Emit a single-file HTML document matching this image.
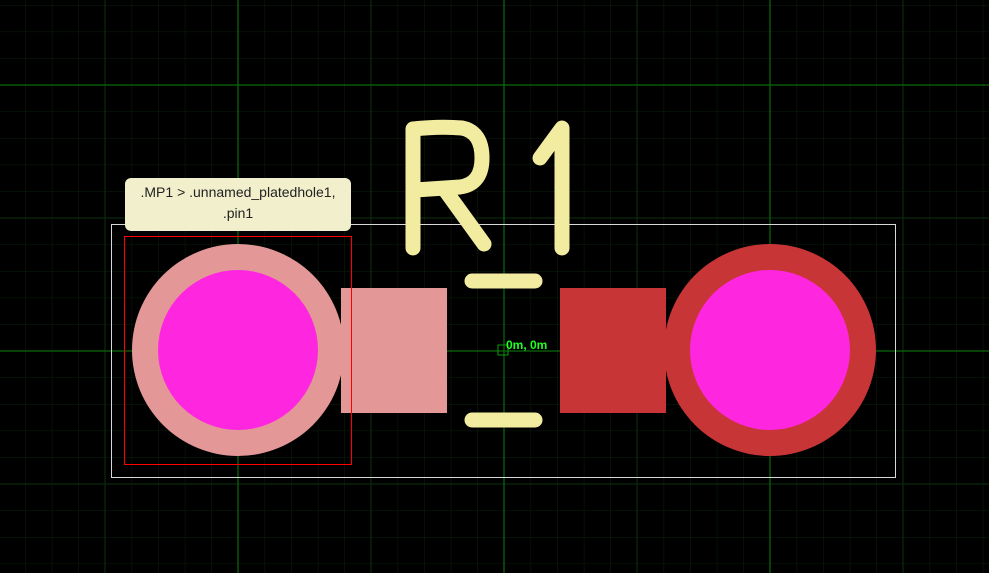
<!DOCTYPE html>
<html><head><meta charset="utf-8"><style>
html,body{margin:0;padding:0;background:#000;width:989px;height:573px;overflow:hidden;font-family:"Liberation Sans",sans-serif}
.tip{position:absolute;left:125px;top:178px;width:226px;height:53px;background:#f2efcc;border-radius:6px;font-size:14px;color:#222;text-align:center;line-height:21px;padding-top:4px;box-sizing:border-box}
</style></head><body>
<svg width="989" height="573" style="position:absolute;left:0;top:0">
<defs>
<pattern id="g" x="-28" y="5" width="26.6" height="26.6" patternUnits="userSpaceOnUse">
<path d="M0 0V26.6M0 0H26.6" stroke="#0b1f0b" stroke-width="1" fill="none"/>
</pattern>
</defs>
<rect width="989" height="573" fill="url(#g)"/>
<g stroke="#0d300d" stroke-width="1">
<line x1="105" y1="0" x2="105" y2="573"/><line x1="371" y1="0" x2="371" y2="573"/><line x1="637" y1="0" x2="637" y2="573"/><line x1="903" y1="0" x2="903" y2="573"/>
<line x1="0" y1="218" x2="989" y2="218"/><line x1="0" y1="484" x2="989" y2="484"/>
</g>
<g stroke="#0a6a0a" stroke-width="1.2">
<line x1="238" y1="0" x2="238" y2="573"/><line x1="504" y1="0" x2="504" y2="573"/><line x1="770" y1="0" x2="770" y2="573"/>
<line x1="0" y1="85" x2="989" y2="85"/><line x1="0" y1="351" x2="989" y2="351"/>
</g>
<rect x="111.5" y="224.5" width="784" height="253" fill="none" stroke="#d8d8d8" stroke-width="1"/>
<circle cx="238" cy="350" r="106" fill="#e39797"/>
<circle cx="238" cy="350" r="80" fill="#ff26e0"/>
<rect x="341" y="288" width="106" height="125" fill="#e39797"/>
<circle cx="770" cy="350" r="106" fill="#c83536"/>
<circle cx="770" cy="350" r="80" fill="#ff26e0"/>
<rect x="560" y="288" width="106" height="125" fill="#c83536"/>
<g stroke="#f2eca0" stroke-width="15" stroke-linecap="round" stroke-linejoin="round" fill="none">
<path d="M413 248V129Q440 126 462 128Q482 132 482 158Q482 184 460 187L415 190"/>
<path d="M445 190L484 244"/>
<path d="M540 158L562 128V248"/>
<path d="M472 281H535"/>
<path d="M472 420H535"/>
</g>
<rect x="124.5" y="236.5" width="227" height="228" fill="none" stroke="#ff0000" stroke-width="1"/>
<rect x="498" y="345" width="10" height="10" fill="none" stroke="#0a9a0a" stroke-width="1"/>
<text x="506" y="349" fill="#22ff22" font-size="12" font-weight="bold" font-family="Liberation Sans, sans-serif">0m, 0m</text>
</svg>
<div class="tip">.MP1 &gt; .unnamed_platedhole1,<br>.pin1</div>
</body></html>
